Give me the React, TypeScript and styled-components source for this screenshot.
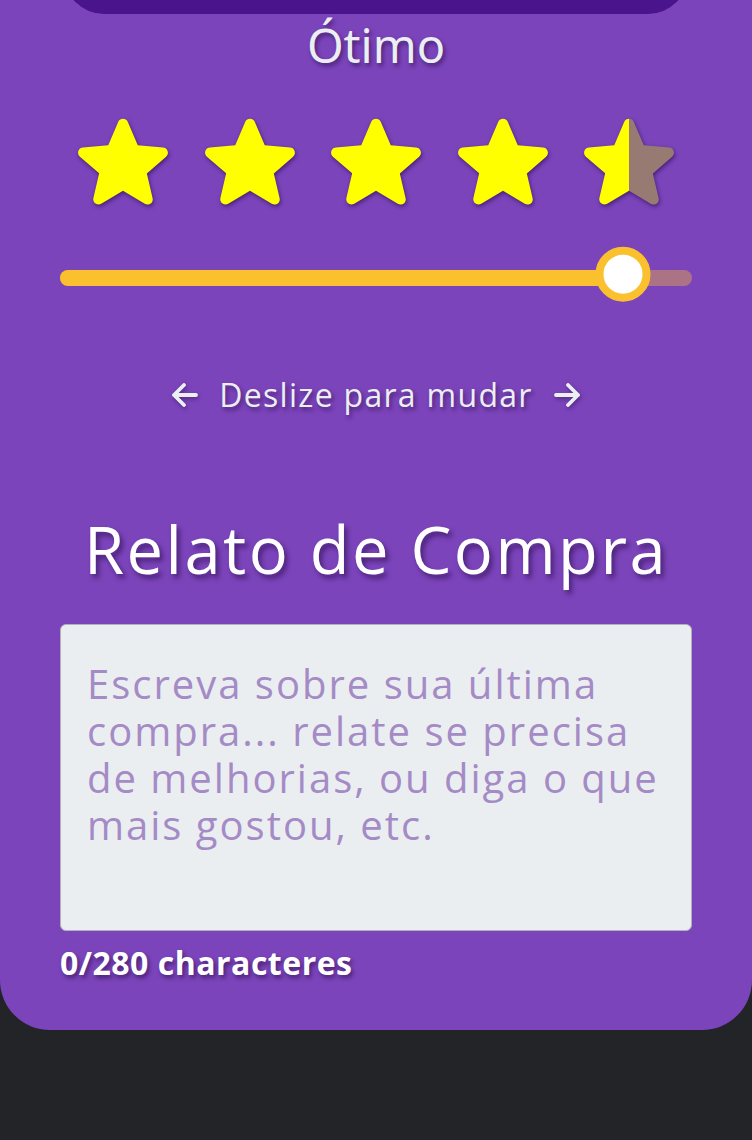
import React, { useState } from 'react';
import styled, { createGlobalStyle } from 'styled-components';

const GlobalStyle = createGlobalStyle`
  html, body {
    margin: 0;
    padding: 0;
    background: #232427;
  }
  * {
    box-sizing: border-box;
  }
`;

const Card = styled.main`
  width: 100%;
  background: #7b44bb;
  border-radius: 0 0 50px 50px;
  padding: 0 60px 49px;
  display: flex;
  flex-direction: column;
  font-family: 'Open Sans', 'Noto Sans', sans-serif;
`;

const HeaderClip = styled.div`
  height: 14px;
  margin: 0 4px;
  overflow: hidden;
  display: flex;
  align-items: flex-end;
`;

const HeaderBox = styled.div`
  width: 100%;
  height: 80px;
  flex-shrink: 0;
  background: #4a148c;
  border-radius: 0 0 40px 40px;
`;

const RatingLabel = styled.div`
  margin-top: 5px;
  text-align: center;
  font-family: 'Noto Sans', sans-serif;
  font-size: 47px;
  line-height: 52px;
  color: #eceff1;
  text-shadow: 2px 3px 4px rgba(40, 10, 70, 0.6);
`;

const StarRow = styled.div`
  margin-top: 29px;
  display: flex;
  justify-content: space-between;
`;

const StarSvg = styled.svg`
  width: 126px;
  height: 126px;
  display: block;
  filter: drop-shadow(1px 2px 2px rgba(30, 0, 60, 0.55));
`;

const SliderWrap = styled.div`
  margin-top: 20px;
  height: 56px;
  position: relative;
  display: flex;
  align-items: center;
  padding-top: 8px;
`;

const Track = styled.div`
  position: relative;
  width: 100%;
  height: 16px;
  border-radius: 8px;
  background: rgba(251, 192, 45, 0.38);
`;

const Range = styled.div`
  height: 100%;
  border-radius: 8px;
  background: #fbc02d;
`;

const Thumb = styled.div`
  position: absolute;
  top: 50%;
  width: 55px;
  height: 55px;
  border-radius: 50%;
  background: #ffffff;
  border: 8px solid #fbc02d;
  transform: translate(-50%, -57%);
`;

const Hint = styled.div`
  margin-top: 73px;
  display: flex;
  justify-content: center;
  align-items: center;
  gap: 20px;
  color: #eceff1;
  font-size: 32px;
  letter-spacing: 1.3px;
  line-height: 40px;
  text-shadow: 2px 3px 4px rgba(40, 10, 70, 0.6);
`;

const ArrowSvg = styled.svg`
  width: 28px;
  height: 26px;
  display: block;
  filter: drop-shadow(1px 2px 2px rgba(40, 10, 70, 0.5));
`;

const Title = styled.h2`
  margin: 94px 0 0;
  text-align: center;
  font-weight: 400;
  font-size: 65px;
  letter-spacing: 2.5px;
  line-height: 80px;
  color: #ffffff;
  text-shadow: 3px 4px 5px rgba(40, 10, 70, 0.6);
`;

const TextArea = styled.textarea`
  margin-top: 35px;
  width: 100%;
  height: 307px;
  resize: none;
  background: #ebeef1;
  border: 1px solid #b4b0bb;
  border-radius: 6px;
  padding: 35px 26px;
  font-family: 'Open Sans', 'Noto Sans', sans-serif;
  font-size: 40px;
  letter-spacing: 2px;
  line-height: 47px;
  color: #4a148c;
  outline: none;

  &::placeholder {
    color: #a58bc6;
  }
`;

const Counter = styled.div`
  margin-top: 14px;
  font-size: 32px;
  line-height: 36px;
  font-weight: 700;
  letter-spacing: 0.5px;
  color: #ffffff;
  text-shadow: 2px 3px 4px rgba(40, 10, 70, 0.6);
`;

const STAR =
  'M12 17.27l4.15 2.51c.76.46 1.69-.22 1.49-1.08l-1.1-4.72 3.67-3.18c.67-.58.31-1.68-.57-1.75l-4.83-.41-1.89-4.46c-.34-.81-1.5-.81-1.84 0L9.19 8.63l-4.83.41c-.88.07-1.24 1.17-.57 1.75l3.67 3.18-1.1 4.72c-.2.86.73 1.54 1.49 1.08l4.15-2.5z';

function Star({ fill, id }: { fill: number; id: string }) {
  return (
    <StarSvg viewBox="0 0 24 24">
      <defs>
        <linearGradient id={id} x1="0" x2="24" y1="0" y2="0" gradientUnits="userSpaceOnUse">
          <stop offset={fill} stopColor="#ffff00" />
          <stop offset={fill} stopColor="#977b72" />
        </linearGradient>
      </defs>
      <path d={STAR} fill={`url(#${id})`} />
    </StarSvg>
  );
}

function Arrow({ dir }: { dir: 'left' | 'right' }) {
  const d = dir === 'left' ? 'M13 3 L3 13 L13 23 M3 13 H25' : 'M15 3 L25 13 L15 23 M25 13 H3';
  return (
    <ArrowSvg viewBox="0 0 28 26">
      <path d={d} fill="none" stroke="#eceff1" strokeWidth="3.8" strokeLinecap="round" strokeLinejoin="round" />
    </ArrowSvg>
  );
}

const LABELS: Record<number, string> = {
  1: 'Péssimo',
  2: 'Ruim',
  3: 'Regular',
  4: 'Bom',
  5: 'Ótimo',
};

export default function App() {
  const [rating] = useState(4.5);
  const [text, setText] = useState('');
  const min = 0.45;
  const max = 5;
  const pct = ((rating - min) / (max - min)) * 100;

  return (
    <>
      <GlobalStyle />
      <Card>
        <HeaderClip>
          <HeaderBox />
        </HeaderClip>
        <RatingLabel>{LABELS[Math.ceil(rating)]}</RatingLabel>
        <StarRow>
          {[1, 2, 3, 4, 5].map(n => (
            <Star key={n} id={`star-${n}`} fill={Math.max(0, Math.min(1, rating - n + 1))} />
          ))}
        </StarRow>
        <SliderWrap>
          <Track>
            <Range style={{ width: `${pct}%` }} />
            <Thumb style={{ left: `${pct}%` }} />
          </Track>
        </SliderWrap>
        <Hint>
          <Arrow dir="left" />
          <span>Deslize para mudar</span>
          <Arrow dir="right" />
        </Hint>
        <Title>Relato de Compra</Title>
        <TextArea
          value={text}
          maxLength={280}
          onChange={e => setText(e.target.value)}
          placeholder={'Escreva sobre sua última\ncompra... relate se precisa\nde melhorias, ou diga o que\nmais gostou, etc.'}
        />
        <Counter>{text.length}/280 characteres</Counter>
      </Card>
    </>
  );
}
